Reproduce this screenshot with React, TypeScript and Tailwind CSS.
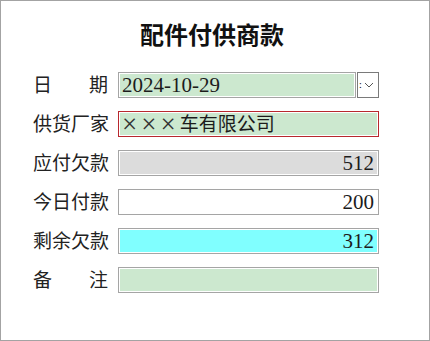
const font = { fontFamily: '"Liberation Serif", "Noto Sans CJK SC", serif' };

function Label({ text }: { text: string }) {
  const chars = text.split('');
  return (
    <div className="w-[75px] flex justify-between text-[19px] leading-none text-[#222]">
      {chars.map((c, i) => (
        <span key={i}>{c}</span>
      ))}
    </div>
  );
}

function Field({
  value,
  bg,
  border = 'border-[#a5a5a5]',
  align = 'left',
}: {
  value?: React.ReactNode;
  bg: string;
  border?: string;
  align?: 'left' | 'right';
}) {
  return (
    <div className={`h-[26px] flex-1 border ${border} bg-white p-px`}>
      <div
        className={`h-full flex items-center ${bg} ${
          align === 'right' ? 'justify-end pr-[3px]' : 'pl-[2px]'
        } text-[21px] leading-none text-[#1c1c1c]`}
      >
        {value}
      </div>
    </div>
  );
}

export default function App() {
  return (
    <div
      className="w-[430px] h-[341px] border border-[#a3a3a3] bg-white flex flex-col"
      style={font}
    >
      <h1 className="mt-[23px] pr-[6px] text-center text-[24px] font-bold leading-none text-[#111]">
        配件付供商款
      </h1>

      <div className="mt-[24px] flex flex-col gap-[13px] pl-[32px] w-[378px]">
        <div className="flex items-center gap-[10px]">
          <Label text="日期" />
          <div className="flex flex-1 h-[26px]">
            <Field value="2024-10-29" bg="bg-[#cce8cf]" />
            <div className="w-[22px] h-[26px] ml-px border border-[#7a7a7a] bg-white flex items-center">
              <span className="text-[10px] leading-none text-black ml-[1px]">:</span>
              <svg width="10" height="6" viewBox="0 0 10 6" className="ml-[2px]">
                <path d="M1 1 L5 5 L9 1" fill="none" stroke="#555" strokeWidth="1" />
              </svg>
            </div>
          </div>
        </div>

        <div className="flex items-center gap-[10px]">
          <Label text="供货厂家" />
          <Field
            value={
              <>
                <span className="tracking-[4px] text-[27px] font-light text-[#333]">×××</span>
                <span className="text-[19px]">车有限公司</span>
              </>
            }
            bg="bg-[#cce8cf]"
            border="border-[#b8282e]"
          />
        </div>

        <div className="flex items-center gap-[10px]">
          <Label text="应付欠款" />
          <Field value="512" bg="bg-[#dcdcdc]" align="right" />
        </div>

        <div className="flex items-center gap-[10px]">
          <Label text="今日付款" />
          <Field value="200" bg="bg-white" align="right" />
        </div>

        <div className="flex items-center gap-[10px]">
          <Label text="剩余欠款" />
          <Field value="312" bg="bg-[#80ffff]" align="right" />
        </div>

        <div className="flex items-center gap-[10px]">
          <Label text="备注" />
          <Field bg="bg-[#cce8cf]" />
        </div>
      </div>
    </div>
  );
}
